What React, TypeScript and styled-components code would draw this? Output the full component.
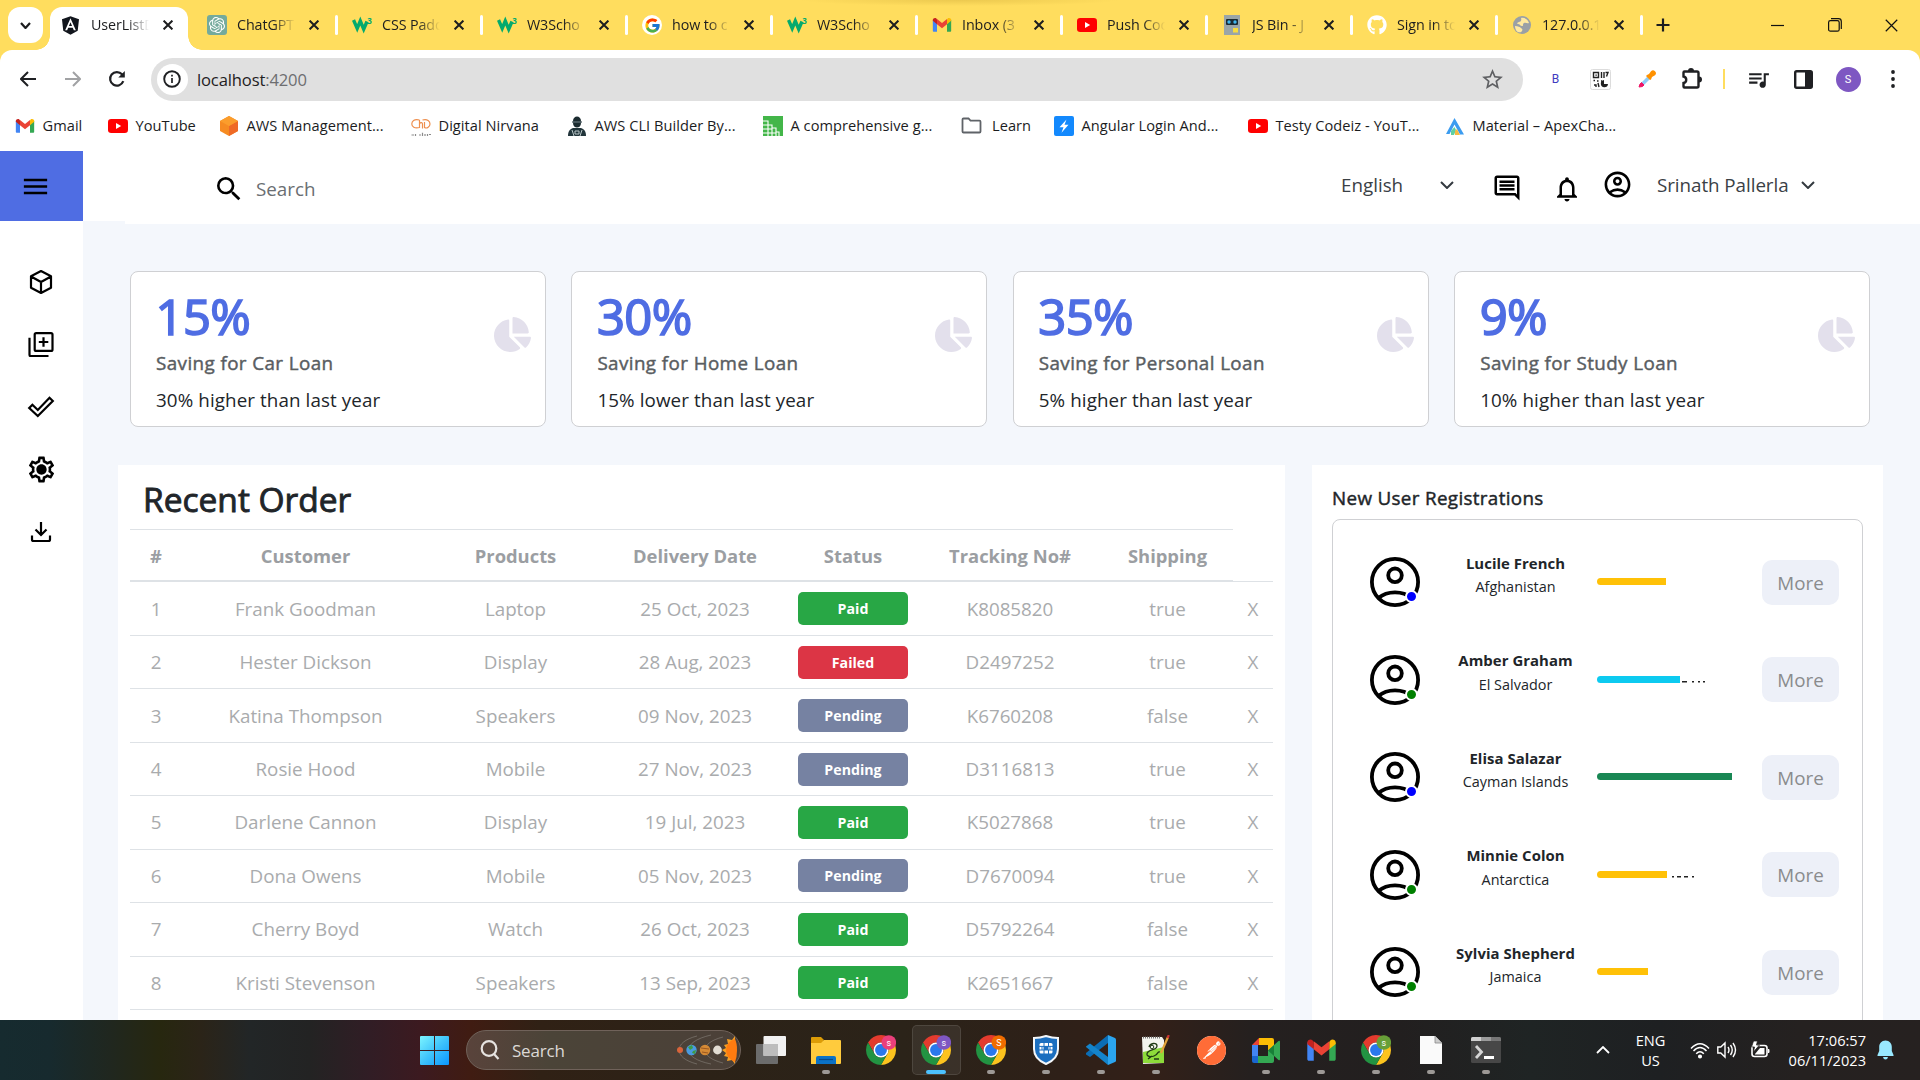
import React from "react";
import styled, { createGlobalStyle, css } from "styled-components";
import {
  MdMenu,
  MdSearch,
  MdOutlineComment,
  MdNotificationsNone,
  MdOutlineAccountCircle,
  MdQueueMusic,
  MdStarBorder,
  MdOutlineSettings,
} from "react-icons/md";
import { FaGithub, FaChartPie, FaAngular } from "react-icons/fa";
import { FcGoogle } from "react-icons/fc";
import { SiOpenai, SiPostman } from "react-icons/si";

const font = `"Open Sans", "Noto Sans", "Segoe UI", sans-serif`;

const GlobalStyle = createGlobalStyle`
  * { box-sizing: border-box; }
  body { margin: 0; background: #fff; }
  svg { display: block; flex: none; }
  h1, h2, h3, p { margin: 0; }
`;

const Screen = styled.div`
  width: 1920px;
  height: 1080px;
  overflow: hidden;
  display: flex;
  flex-direction: column;
  font-family: ${font};
  color: #212529;
  white-space: nowrap;
`;

/* ---------- Tab strip ---------- */

const TabStrip = styled.div`
  height: 50px;
  flex: none;
  display: flex;
  align-items: flex-start;
  background: radial-gradient(160px 6px at 960px 0, #ecc94f, #ffdd5e);
  padding-left: 8px;
`;

const TabMenu = styled.button`
  width: 35px;
  height: 36px;
  margin: 7px 7px 0 0;
  padding: 0;
  border: 0;
  border-radius: 12px;
  background: #fff;
  display: grid;
  place-items: center;
`;

const Tab = styled.div<{ $active?: boolean }>`
  position: relative;
  display: flex;
  align-items: center;
  height: 36px;
  width: 145px;
  margin-top: 7px;
  padding-left: 14px;
  ${(p) =>
    p.$active &&
    css`
      width: 138px;
      height: 43px;
      margin-right: 5px;
      padding: 0 0 7px 10px;
      background: #fff;
      border-radius: 12px 12px 0 0;
      &::before,
      &::after {
        content: "";
        position: absolute;
        bottom: 0;
        width: 14px;
        height: 14px;
      }
      &::before {
        left: -14px;
        background: radial-gradient(circle at 0 0, transparent 13.5px, #fff 14px);
      }
      &::after {
        right: -14px;
        background: radial-gradient(circle at 100% 0, transparent 13.5px, #fff 14px);
      }
    `}
`;

const TabTitle = styled.span`
  width: 58px;
  margin-left: 10px;
  overflow: hidden;
  font-size: 14.3px;
  line-height: 20px;
  letter-spacing: -0.1px;
  color: #1c1d1f;
  mask-image: linear-gradient(90deg, #000 62%, transparent 100%);
`;

const TabClose = styled.span`
  margin-left: 14px;
`;

const TabDivider = styled.span`
  margin-left: auto;
  width: 3px;
  height: 20px;
  border-radius: 2px;
  background: #fff;
`;

const NewTab = styled.span`
  margin: 18px 0 0 13px;
`;

const WindowControls = styled.div`
  display: flex;
  margin-left: auto;
  height: 50px;
  align-items: center;
  & > span {
    width: 57px;
    display: grid;
    place-items: center;
  }
`;

/* ---------- Toolbar ---------- */

const ToolbarBack = styled.div`
  flex: none;
  background: #ffdd5e;
`;

const Toolbar = styled.div`
  height: 51px;
  display: flex;
  align-items: center;
  background: #fff;
  border-radius: 12px 12px 0 0;
  padding: 7px 10px 0 17px;
`;

const NavButton = styled.span`
  width: 22px;
  margin-right: 22.5px;
  display: grid;
  place-items: center;
`;

const Omnibox = styled.div`
  width: 1372.500px;
  flex: none;
  height: 43px;
  border-radius: 22px;
  background: #e0e0e0;
  display: flex;
  align-items: center;
  padding: 0 18px 0 6px;
  margin-right: 25px;
  font-size: 16.6px;
  letter-spacing: -0.15px;
  color: #1f2023;
  & > svg:last-child {
    margin-left: auto;
  }
`;

const SiteInfo = styled.span`
  width: 31px;
  height: 31px;
  border-radius: 50%;
  background: #fff;
  display: grid;
  place-items: center;
  margin-right: 9.500px;
`;

const Port = styled.span`
  color: #6d6e70;
`;

const ToolSlot = styled.span<{ $w?: number }>`
  width: ${(p) => p.$w ?? 45}px;
  flex: none;
  display: grid;
  place-items: center;
`;

const ToolDivider = styled.i`
  width: 2px;
  height: 20px;
  margin-left: -5px;
  background: #ffdd5e;
`;

const ProfileBadge = styled.span`
  width: 25px;
  height: 25px;
  border-radius: 50%;
  background: #7e57c2;
  color: #fff;
  font: 11px/25px Roboto, sans-serif;
  text-align: center;
`;

const LetterIcon = styled.span`
  color: #3f3bc0;
  font: 12px Roboto, sans-serif;
`;

/* ---------- Bookmarks ---------- */

const BookmarkBar = styled.div`
  height: 50px;
  flex: none;
  display: flex;
  align-items: center;
  padding-left: 15px;
  background: #fff;
`;

const Bookmark = styled.div<{ $w: number; $gap?: number }>`
  width: ${(p) => p.$w}px;
  flex: none;
  display: flex;
  align-items: center;
  gap: ${(p) => p.$gap ?? 7.5}px;
  font-size: 14.6px;
  letter-spacing: 0.05px;
  color: #1b1c1e;
  & > span {
    margin-top: -2px;
  }
`;

/* ---------- Dashboard shell ---------- */

const Page = styled.div`
  height: 869px;
  flex: none;
  display: flex;
  overflow: hidden;
`;

const Sidebar = styled.aside`
  width: 83px;
  flex: none;
  background: #fff;
`;

const MenuToggle = styled.div`
  height: 70px;
  background: #4f6de3;
  padding: 19.500px 0 0 19.500px;
`;

const SideNav = styled.nav`
  display: flex;
  flex-direction: column;
  align-items: center;
  padding: 29.5px 1px 0 0;
`;

const SideItem = styled.span`
  height: 62.5px;
  display: grid;
  place-items: center;
`;

const Main = styled.main`
  flex: 1;
  background: #f4f7fc;
`;

const HeaderRow = styled.header`
  display: flex;
  align-items: flex-start;
`;

const HeaderGap = styled.div`
  width: 42px;
  height: 70px;
  background: #fff;
`;

const Header = styled.div`
  flex: 1;
  height: 73px;
  background: #fff;
  display: flex;
  align-items: flex-start;
  font-size: 18.8px;
  line-height: 28px;
`;

const SearchBox = styled.div`
  display: flex;
  align-items: center;
  width: 1216px;
  padding: 21.500px 0 0 87.500px;
  gap: 11.500px;
  color: #6a6e72;
`;

const LanguageSelect = styled.div`
  display: flex;
  align-items: center;
  justify-content: space-between;
  width: 113px;
  margin-top: 20px;
  color: #3a4045;
`;

const HeaderIcon = styled.span<{ $top: number; $left: number }>`
  margin: ${(p) => p.$top}px 0 0 ${(p) => p.$left}px;
`;

const UserMenu = styled.div`
  display: flex;
  align-items: center;
  width: 158px;
  justify-content: space-between;
  margin: 20px 0 0 24.500px;
  letter-spacing: -0.05px;
  color: #3a4045;
`;

/* ---------- Saving cards ---------- */

const CardGrid = styled.section`
  display: grid;
  grid-template-columns: repeat(4, 416px);
  column-gap: 25.4px;
  padding: 47px 0 0 47px;
`;

const Card = styled.article`
  height: 156px;
  background: #fff;
  border: 1px solid #cfd0d3;
  border-radius: 8px;
  display: flex;
  justify-content: space-between;
  padding: 20px 14px 0 25px;
`;

const Percent = styled.h2`
  font-size: 49px;
  font-weight: 400;
  line-height: 52px;
  margin: -2px 0 0 -0.500px;
  letter-spacing: -0.6px;
  -webkit-text-stroke: 1.7px #4f6de3;
  color: #4f6de3;
`;

const CardTitle = styled.h3`
  font-size: 18.8px;
  font-weight: 400;
  line-height: 24px;
  margin-top: 9px;
  letter-spacing: 0.42px;
  -webkit-text-stroke: 0.45px #595d61;
  color: #595d61;
`;

const CardNote = styled.p`
  font-size: 18.8px;
  line-height: 28px;
  margin-top: 11px;
  letter-spacing: 0.1px;
`;

const PieSlot = styled.span`
  margin-top: 24px;
  color: #e3e0ec;
`;

/* ---------- Orders ---------- */

const Panels = styled.section`
  display: flex;
  align-items: flex-start;
  gap: 27px;
  padding: 38px 0 0 35px;
`;

const OrdersPanel = styled.div`
  width: 1167px;
  height: 640px;
  background: #fff;
  padding: 12px 12px 0;
`;

const OrdersTitle = styled.h2`
  font-size: 33.5px;
  font-weight: 400;
  line-height: 44px;
  height: 52px;
  padding-left: 13px;
  letter-spacing: 0;
  -webkit-text-stroke: 0.9px #212529;
`;

const columns = "52px 247px 173px 186px 130px 184px 131px";

const OrderHead = styled.div`
  width: 1103px;
  height: 53px;
  border-top: 1px solid #dee2e6;
  border-bottom: 2px solid #dee2e6;
  display: grid;
  grid-template-columns: ${columns};
  align-items: center;
  justify-items: center;
  font-size: 18.4px;
  font-weight: 700;
  letter-spacing: -0.02px;
  color: #9b9ea2;
`;

const OrderRow = styled.div`
  width: 1143px;
  height: 53.43px;
  border-bottom: 1px solid #dee2e6;
  display: grid;
  grid-template-columns: ${columns} 40px;
  align-items: center;
  justify-items: center;
  font-size: 18.8px;
  color: #a9abad;
  &:nth-child(3) {
    height: 54px;
  }
`;

const HeadWrap = styled.div`
  display: flex;
  align-items: flex-end;
`;

const HeadTail = styled.i`
  width: 40px;
  height: 1px;
  background: #dee2e6;
`;

const statusColor: Record<string, string> = {
  Paid: "#28a745",
  Failed: "#dc3545",
  Pending: "#7682a2",
};

const StatusBadge = styled.span<{ $status: string }>`
  width: 110px;
  height: 33px;
  border-radius: 5px;
  background: ${(p) => statusColor[p.$status]};
  color: #fff;
  font-size: 14.2px;
  font-weight: 700;
  line-height: 33px;
  text-align: center;
  letter-spacing: 0;
`;

/* ---------- Registrations ---------- */

const UsersPanel = styled.div`
  width: 571px;
  height: 640px;
  background: #fff;
  padding: 19px 20px 0;
`;

const UsersTitle = styled.h3`
  font-size: 18.8px;
  font-weight: 400;
  line-height: 29px;
  height: 35px;
  letter-spacing: 0.35px;
  -webkit-text-stroke: 0.45px #212529;
`;

const UsersCard = styled.div`
  height: 700px;
  border: 1px solid #cfd0d3;
  border-radius: 8px;
  padding: 13.5px 23px 0 37px;
`;

const UserRow = styled.div`
  height: 97.5px;
  display: flex;
  align-items: center;
`;

const AvatarWrap = styled.span`
  position: relative;
  width: 50px;
  height: 50px;
`;

const PresenceDot = styled.i<{ $color: string }>`
  position: absolute;
  left: 35px;
  top: 33px;
  width: 13px;
  height: 13px;
  border: 2px solid #fff;
  border-radius: 50%;
  background: ${(p) => p.$color};
`;

const UserName = styled.div`
  width: 150px;
  margin: -14px 6.5px 0 20.5px;
  text-align: center;
  font-size: 14.4px;
  line-height: 24.5px;
  letter-spacing: 0.03px;
`;

const Strong = styled.div`
  font-weight: 700;
  font-size: 14.9px;
  letter-spacing: 0.05px;
`;

const Progress = styled.div`
  width: 135px;
  height: 7px;
  margin-top: -1px;
  display: flex;
  align-items: flex-end;
  border-radius: 4px 0 0 4px;
  overflow: hidden;
`;

const ProgressFill = styled.span<{ $pct: number; $color: string }>`
  width: ${(p) => p.$pct}%;
  height: 7px;
  background: ${(p) => p.$color};
`;

const MoreButton = styled.button`
  margin-left: auto;
  width: 77px;
  height: 45px;
  padding: 1px 0 0;
  border: 0;
  border-radius: 10px;
  background: #edf0f8;
  color: #8a8b8d;
  font-family: ${font};
  font-size: 18.8px;
`;

/* ---------- Taskbar ---------- */

const Taskbar = styled.footer`
  height: 60px;
  flex: none;
  display: flex;
  align-items: center;
  padding-left: 407px;
  color: #fff;
  background: linear-gradient(
    90deg,
    #162b2f 0,
    #172a2e 50px,
    #20271f 110px,
    #27270f 160px,
    #2b2418 200px,
    #222627 250px,
    #232323 310px,
    #311d25 370px,
    #3c1a20 420px,
    #401c12 470px,
    #302115 540px,
    #2c2217 700px,
    #2b2319 900px,
    #2e2018 1060px,
    #332018 1150px,
    #25201f 1250px,
    #221f1f 1400px,
    #1f2424 1530px,
    #1e2022 1660px,
    #252120 1800px,
    #262120 1920px
  );
`;

const TaskSlot = styled.span<{ $active?: boolean }>`
  position: relative;
  width: 49px;
  height: 50px;
  margin: 0 3px;
  border-radius: 5px;
  display: grid;
  place-items: center;
  border: 1px solid ${(p) => (p.$active ? "#ffffff1a" : "transparent")};
  background: ${(p) => (p.$active ? "#ffffff12" : "transparent")};
`;

const Indicator = styled.i<{ $active?: boolean }>`
  position: absolute;
  bottom: 0;
  width: ${(p) => (p.$active ? 20 : 8)}px;
  height: 4px;
  border-radius: 2px;
  background: ${(p) => (p.$active ? "#4cc2ff" : "#9d9996")};
`;

const TaskSearch = styled.div`
  width: 275px;
  height: 40px;
  margin: 0 2.5px 0 4px;
  border-radius: 20px;
  border: 1px solid #70625a;
  background: linear-gradient(90deg, #59433b, #4b4438 30%, #4b4038);
  display: flex;
  align-items: center;
  padding: 0 1px 0 13px;
  gap: 12px;
  font-size: 17px;
  letter-spacing: -0.2px;
  color: #dcd9d6;
  & > svg:last-child {
    margin-left: auto;
  }
`;

const Tray = styled.div`
  margin-left: auto;
  display: flex;
  align-items: center;
  padding-right: 16px;
`;

const TrayText = styled.div<{ $w: number; $right?: boolean }>`
  width: ${(p) => p.$w}px;
  text-align: ${(p) => (p.$right ? "right" : "center")};
  font-size: 14.6px;
  line-height: 20.5px;
  letter-spacing: 0;
`;

const TrayIcon = styled.span<{ $w: number }>`
  width: ${(p) => p.$w}px;
  display: grid;
  place-items: center;
`;

/* ---------- Drawings ---------- */

const CloseIcon = ({ size = 10, w = 2, color = "#1c1d1f" }) => (
  <svg width={size} height={size} viewBox="0 0 10 10">
    <path d="M.6.6l8.8 8.8M9.4.6L.6 9.4" stroke={color} strokeWidth={(w * 10) / size} />
  </svg>
);

const Chevron = ({ w = 14, h = 8, stroke = 2, color = "#343a40", up = false }) => (
  <svg width={w + 2} height={h + 2} viewBox={`-1 -1 ${w + 2} ${h + 2}`}>
    <path
      d={up ? `M0 ${h}L${w / 2} 0L${w} ${h}` : `M0 0L${w / 2} ${h}L${w} 0`}
      fill="none"
      stroke={color}
      strokeWidth={stroke}
    />
  </svg>
);

const GmailIcon = ({ w = 20 }) => (
  <svg width={w} height={w} viewBox="0 0 24 24">
    <path d="M1 5.6v13.2c0 .7.6 1.2 1.2 1.2H6V10z" fill="#4285f4" />
    <path d="M23 5.6v13.2c0 .7-.6 1.2-1.2 1.2H18V10z" fill="#34a853" />
    <path d="M18 5.5V11l5-4V6c0-2.400-2.700-3-4-2z" fill="#fbbc04" />
    <path d="M6 5.500V11L1 7V6c0-2.400 2.700-3 4-2z" fill="#c5221f" />
    <path d="M6 11V4.800l6 4.700 6-4.700V11l-6 4.800z" fill="#ea4335" />
  </svg>
);

const YouTubeIcon = () => (
  <svg width="20" height="20" viewBox="0 0 20 20">
    <rect y="3" width="20" height="14" rx="3.200" fill="#f00" />
    <path d="M8 7l5.200 3L8 13z" fill="#fff" />
  </svg>
);

const W3Icon = () => (
  <svg width="20" height="20" viewBox="0 0 20 20">
    <path d="M1.500 5l3.700 8.500L8.300 6l3.400 8.200L15 6.500" fill="none" stroke="#04aa6d" strokeWidth="3.400" />
    <text x="15.300" y="8.500" fontSize="8" fontWeight="700" fontFamily="Open Sans" fill="#04aa6d">3</text>
  </svg>
);

const ChatGptTile = styled.span`
  width: 20px;
  height: 20px;
  flex: none;
  border-radius: 3px;
  background: #74aa9c;
  color: #fff;
  display: grid;
  place-items: center;
`;

const GoogleTile = styled(ChatGptTile)`
  border-radius: 50%;
  background: #fff;
`;

const PostmanTile = styled.span`
  width: 29px;
  height: 29px;
  border-radius: 50%;
  background: #fff;
`;

const JsBinIcon = () => (
  <svg width="20" height="20" viewBox="0 0 20 20">
    <rect x="2" width="16" height="20" fill="#9aa5a8" />
    <rect x="4" y="4" width="12" height="6" rx="1" fill="#1b2a33" />
    <circle cx="7" cy="7" r="1.700" fill="#3fb6f0" />
    <circle cx="13" cy="7" r="1.700" fill="#3fb6f0" />
    <rect x="11" y="13" width="5" height="4.500" fill="#f8dc3d" />
  </svg>
);

const GlobeIcon = () => (
  <svg width="20" height="20" viewBox="0 0 20 20">
    <circle cx="10" cy="10" r="9" fill="#9aa0a6" />
    <path d="M9 3c3-1 7 1 8 5-2 1-3-1-5 0s0 3-2 3-2-2-4-2 0-2 1-2 3-1 2-4zM3 11c3 0 5 1 6 2s2 1 1 3-3 1-4 1-3-3-3-6z" fill="#ffe9a0" />
  </svg>
);

const AwsBoxIcon = () => (
  <svg width="20" height="20" viewBox="0 0 20 20">
    <path d="M10 0l9 5v10l-9 5-9-5V5z" fill="#f68b22" />
    <path d="M10 10l9-5v10l-9 5z" fill="#ef6a26" />
    <path d="M10 0l9 5-9 5-9-5z" fill="#fb9d2c" />
  </svg>
);

const NirvanaIcon = () => (
  <svg width="20" height="20" viewBox="0 0 20 20" fill="none" stroke="#ee8f4e" strokeWidth="1.200">
    <path d="M8.500 4C3 2.500.8 5.500.8 8S3.500 13 8.500 11.500V4M8.500 7.500c1.500-1.500 3-1 3 .5v4.500M11.500 4c5-1.500 7.500 1.500 7.500 4s-3 5-5.500 3.500V6" />
    <path d="M.5 19h2.500M4.500 18v2M8 19h2M11.500 16.800v3.200M14 18v2M16.500 18v2M18 18.500h2" stroke="#8b8b8b" />
  </svg>
);

const BuilderIcon = () => (
  <svg width="20" height="20" viewBox="0 0 20 20">
    <path d="M6 5c0-6 8-6 8 0l1 1-1 1c0 6-8 6-8 0L5 6z" fill="#1b2b30" />
    <path d="M1 20c0-5 2-7 5-8h8c3 1 5 3 5 8z" fill="#22353b" />
    <path d="M5.500 6h9" stroke="#8fa0a4" strokeWidth=".8" />
    <path d="M5 14l2 6M15 14l-2 6M8 15h4v3H8z" stroke="#b9c6c8" strokeWidth="1" fill="none" />
  </svg>
);

const GuideIcon = () => (
  <svg width="20" height="20" viewBox="0 0 20 20">
    <rect width="20" height="20" fill="#43b649" />
    <path d="M0 5h5v4h4v3h4v4h3v4M0 9h5v11M0 13h9v7M0 17h13v3" fill="none" stroke="#fff" strokeWidth="1.100" />
  </svg>
);

const FolderOutline = () => (
  <svg width="21" height="20" viewBox="0 0 21 20">
    <path d="M1.500 15.500v-12q0-1 1-1h5l2 2.200h9q1 0 1 1v9.800q0 1-1 1h-16q-1 0-1-1z" fill="none" stroke="#5f6368" strokeWidth="1.800" />
  </svg>
);

const BoltIcon = () => (
  <svg width="20" height="20" viewBox="0 0 20 20">
    <rect width="20" height="20" rx="2" fill="#1389fd" />
    <path d="M12.500 3.500L5.500 11.300h4l-2 5.400 7-7.900h-4z" fill="#fff" />
  </svg>
);

const ApexIcon = () => (
  <svg width="20" height="20" viewBox="0 0 20 20">
    <path d="M9.500 2L1 18h3.500l5-9.500 5.500 10h4z" fill="#3c9cf0" />
    <path d="M6 19v-4l3.500-4 1.500 3-2 5z" fill="#5fd0a0" />
    <path d="M10 19v-4l2-2 3 6z" fill="#f5b942" />
  </svg>
);

const QrIcon = () => (
  <svg width="21" height="21" viewBox="0 0 21 21">
    <rect x=".5" y=".5" width="20" height="20" rx="2" fill="#fff" stroke="#dcdcdc" />
    <path d="M3.500 3.500h5v5h-5zM11.500 3v6M14 3v6M15.500 3.500h2.500l-1.500 4M3.500 11.500h1.500M7 12h1.500M4 16h2v2M8 14l1 4M11 12h1" fill="none" stroke="#222" strokeWidth="1.400" />
    <path d="M14 11a3.600 3.600 0 1 0 4 4h-4z" fill="#222" />
    <path d="M5.500 5.500h1.200v1.200H5.500z" />
  </svg>
);

const PickerIcon = () => (
  <svg width="18" height="18" viewBox="0 0 18 18">
    <path d="M3 13l7-7 2.500 2.500-7 7z" fill="#8fcdf8" />
    <path d="M1 17l1-3 1.500-1.500 2.500 2.500L4.500 16.500z" fill="#ee1667" stroke="#ee1667" />
    <path d="M9 5l2-1 2-2.800q2-2 4 0t0 4L14 7l-1 2.500-1 .5-4-4z" fill="#ff9100" />
  </svg>
);

const PuzzleIcon = () => (
  <svg width="24" height="24" viewBox="0 0 24 24">
    <path d="M3.500 7V5.500q0-1 1-1H17q1.500 0 1.500 1.500v13q0 1.500-1.500 1.500H4.500q-1 0-1-1V16a3.300 3.300 0 0 0 0-6.500z" fill="none" stroke="#1f2023" strokeWidth="2.400" />
    <path d="M8 4a3 3 0 0 1 6 0zM19 9.500a3 3 0 0 1 0 6z" fill="#1f2023" />
  </svg>
);

const SidePanelIcon = () => (
  <svg width="19" height="19" viewBox="0 0 19 19">
    <rect x="1.200" y="1.200" width="16.600" height="16.600" rx="1.500" fill="none" stroke="#1f2023" strokeWidth="2.400" />
    <path d="M11 1h7v17h-7z" fill="#1f2023" />
  </svg>
);

const DotsIcon = () => (
  <svg width="6" height="18" viewBox="0 0 6 18" fill="#1f2023">
    <circle cx="3" cy="2" r="1.900" />
    <circle cx="3" cy="9" r="1.900" />
    <circle cx="3" cy="16" r="1.900" />
  </svg>
);

const ArrowIcon = ({ flip = false, color = "#1f2023" }) => (
  <svg width="16" height="16" viewBox="0 0 16 16" fill="none" stroke={color} strokeWidth="2">
    <path d={flip ? "M0 8h14.500M8 1l7 7-7 7" : "M16 8H1.500M8 1L1 8l7 7"} />
  </svg>
);

const ReloadIcon = () => (
  <svg width="18" height="18" viewBox="0 0 18 18">
    <path d="M15.300 11.200A6.800 6.800 0 1 1 14 4.300l1 1" fill="none" stroke="#1f2023" strokeWidth="2.200" />
    <path d="M16.800 1v6.500h-6.500z" fill="#1f2023" />
  </svg>
);

const InfoIcon = () => (
  <svg width="18" height="18" viewBox="0 0 18 18">
    <circle cx="9" cy="9" r="7.800" fill="none" stroke="#1f2023" strokeWidth="1.900" />
    <path d="M9 8v5M9 4.800v1.800" stroke="#1f2023" strokeWidth="1.700" />
  </svg>
);

const sideStroke = { fill: "none", stroke: "#000", strokeWidth: 2.2, strokeLinejoin: "round" as const };

const CubeIcon = () => (
  <svg width="26" height="26" viewBox="0 0 26 26" {...sideStroke}>
    <path d="M13 2l10 5.300v11.400L13 24 3 18.700V7.300zM3 7.500l10 5.500 10-5.500M13 13v11" />
  </svg>
);

const LibraryAddIcon = () => (
  <svg width="26" height="26" viewBox="0 -.7 26 26" {...sideStroke}>
    <rect x="6.700" y="1.400" width="17.800" height="17.800" rx="1.500" />
    <path d="M1.500 6v17q0 1.500 1.500 1.500h17.500M15.500 5.500v9.500M10.800 10.300h9.500" />
  </svg>
);

const DoubleCheckIcon = () => (
  <svg width="28" height="22" viewBox="0 0 28 22" {...sideStroke} strokeLinejoin="miter">
    <path d="M2.200 12l3.200-3.200 5.400 5.200L22.500 1.800l3.300 3.200-15 15z" />
  </svg>
);

const DownloadIcon = () => (
  <svg width="22" height="22" viewBox="0 0 22 22" {...sideStroke}>
    <path d="M11 1v12.500M5.500 8.500l5.500 5.500 5.500-5.500M2 14.500v4q0 1.500 1.500 1.500h15q1.500 0 1.500-1.500v-4" strokeLinejoin="miter" />
  </svg>
);

const SettingsIcon = () => (
  <svg width="31" height="31" viewBox="0 0 31 31">
    <MdOutlineSettings size={31} color="#000" />
    <circle cx="15.500" cy="15.500" r="4" />
  </svg>
);

const AvatarIcon = () => (
  <svg width="50" height="50" viewBox="0 0 50 50" fill="none" stroke="#000" strokeWidth="3.800">
    <circle cx="25" cy="25" r="23.100" />
    <circle cx="25" cy="18.300" r="6.800" />
    <path d="M8.500 41Q15 35.300 25 35.300T41.500 41" />
  </svg>
);

const ClippedLabel = ({ pattern, left }: { pattern: string; left: number }) => (
  <svg width={26 + left} height="1.500" viewBox={`${-left} 0 ${26 + left} 1.500`}>
    <path d="M0 .8H25" stroke="#222" strokeWidth="1.400" strokeDasharray={pattern} />
  </svg>
);

const ChromeIcon = ({ badge, letter = "s" }: { badge: string; letter?: string }) => (
  <svg width="30" height="30" viewBox="2 2 44 44">
    <path d="M4.950 13A22 22 0 0 1 43.050 13L24 13A11 11 0 0 0 14.470 29.500Z" fill="#e33b2e" />
    <path d="M43.050 13A22 22 0 0 1 24 46L33.530 29.500A11 11 0 0 0 24 13Z" fill="#fcc31e" />
    <path d="M24 46A22 22 0 0 1 4.950 13L14.470 29.500A11 11 0 0 0 33.530 29.500Z" fill="#229342" />
    <circle cx="24" cy="24" r="11" fill="#fff" />
    <circle cx="24" cy="24" r="8.700" fill="#2a78ec" />
    <circle cx="35.500" cy="13" r="10.700" fill={badge} />
    <text x="35.500" y="17.500" fontSize="13" textAnchor="middle" fontFamily="Roboto" fill="#fff">{letter}</text>
  </svg>
);

const WindowsIcon = () => (
  <svg width="29" height="29" viewBox="0 0 29 29">
    <defs>
      <linearGradient id="win" gradientUnits="userSpaceOnUse" x1="0" y1="0" x2="29" y2="29">
        <stop offset="0" stopColor="#7cf5ff" />
        <stop offset=".5" stopColor="#3fc3fb" />
        <stop offset="1" stopColor="#0a96ff" />
      </linearGradient>
    </defs>
    <path d="M0 1q0-1 1-1h13v14H0zM15 0h13q1 0 1 1v13H15zM0 15h14v14H1q-1 0-1-1zM15 15h14v13q0 1-1 1H15z" fill="url(#win)" />
  </svg>
);

const SolarIcon = () => (
  <svg width="64" height="32" viewBox="0 0 64 32">
    <g fill="none" stroke="#8c8680" strokeWidth=".8" opacity=".7">
      <path d="M22 2C-2 8-2 24 22 30M36 1C6 8 6 24 36 30M48 3C24 9 24 23 48 29" />
    </g>
    <circle cx="5" cy="16" r="3" fill="#d9643a" />
    <circle cx="16.500" cy="16" r="5.200" fill="#4a9be0" />
    <path d="M13 13l4-2 1 3-3 2zM18 17l3-1-1 4-3-1z" fill="#3e9b45" />
    <circle cx="30" cy="16" r="5.200" fill="#d58a35" />
    <path d="M26 14l8 1M27 18l6 1" stroke="#9c5820" />
    <circle cx="42.500" cy="16" r="4.400" fill="#e2ddd4" />
    <path d="M60 2l-3 4-5-1 1 5-4 1 2 3-4 2 4 3-2 3 4 1-1 4 5-1 3 4z" fill="#f7a022" />
    <path d="M60 5q-9 3-9 11t9 12q2-5 2-12t-2-11z" fill="#ff7b10" />
  </svg>
);

const TaskViewIcon = () => (
  <svg width="30" height="28" viewBox="0 0 30 28">
    <rect y="8" width="22" height="20" rx="1" fill="#6c6c6c" />
    <rect x="7.500" width="22.500" height="20" rx="1" fill="#f1f1f1" />
    <rect x="7.500" y="8" width="14.500" height="12" fill="#bdbdbd" />
  </svg>
);

const ExplorerIcon = () => (
  <svg width="30" height="27" viewBox="0 0 30 27">
    <path d="M0 1q0-1 1-1h9l3 3-3 5H0z" fill="#dc9c07" />
    <path d="M0 6h10l3-3h16q1 0 1 1v22q0 1-1 1H0z" fill="#ffcb3d" />
    <path d="M5 27v-6q0-2 2-2h16q2 0 2 2v6z" fill="#0b72c6" />
    <path d="M8 22.500h14" stroke="#06498a" strokeWidth="1.200" />
  </svg>
);

const ShieldIcon = () => (
  <svg width="26" height="30" viewBox="0 0 26 30">
    <path d="M1 3q6 0 12-2 6 2 12 2v11q0 10-12 15Q1 24 1 14z" fill="#1b6fc0" stroke="#f4f7fa" strokeWidth="2" />
    <rect x="6.500" y="8" width="13" height="10.500" rx="1.500" fill="#fff" />
    <path d="M6 11.400h14M6 15h14M11 7.500v4M15.500 7.500v4M9 11.400V15M17 11.400V15M11 15v4M15.500 15v4" stroke="#1b6fc0" strokeWidth="1" />
    <path d="M10.500 11h5v4h-5z" fill="#1b6fc0" />
  </svg>
);

const VsCodeIcon = () => (
  <svg width="30" height="30" viewBox="0 0 30 30">
    <path d="M22 0v8L4 22 0 19.500V18z" fill="#0b6db5" />
    <path d="M0 11.500L4 8.500 22 22v8L0 12z" fill="#1484cb" />
    <path d="M22 0l7 3q1 .5 1 1.500v21q0 1-1 1.500l-7 3z" fill="#2ba5ef" />
  </svg>
);

const NotepadIcon = () => (
  <svg width="28" height="30" viewBox="0 0 28 30">
    <path d="M0 2h20l2 3v23L1 29z" fill="#f3f4ee" />
    <path d="M1 17l21-5v16L1 28z" fill="#8ddb3a" />
    <path d="M1 2.500h18" stroke="#777" strokeWidth="2" strokeDasharray="1 1" />
    <path d="M7 12c1-4 8-5 8-1s-6 3-9 6 1 6 6 4 3-5 6-4M6 24l4-3M12 24h5" fill="none" stroke="#1f3a14" strokeWidth="1.300" />
    <circle cx="10" cy="12" r="1.800" fill="none" stroke="#1f3a14" />
    <path d="M26 2L19 18" stroke="#e2a33b" strokeWidth="2.200" />
    <path d="M26.800 0l-1.200 3" stroke="#c33" strokeWidth="2.200" />
  </svg>
);

const MeetIcon = () => (
  <svg width="28" height="25" viewBox="0 0 28 25">
    <path d="M7 0v7H0z" fill="#ea4335" />
    <path d="M0 7h6v11H0z" fill="#4285f4" />
    <path d="M0 18h6v7H2q-2 0-2-2z" fill="#1967d2" />
    <path d="M7 0h13q2 0 2 2v9l-6 2V7H7z" fill="#fbbc04" />
    <path d="M6 18h10v-5h6v10q0 2-2 2H6z" fill="#34a853" />
    <path d="M16 12.500L26.500 3Q28 2 28 4v17q0 2-1.500 1z" fill="#34a853" />
    <path d="M16 12.500l6-5.500v11z" fill="#188038" />
  </svg>
);

const PageIcon = () => (
  <svg width="22" height="28" viewBox="0 0 22 28">
    <path d="M0 0h15l7 7v21H0z" fill="#fafafa" />
    <path d="M15 0v7h7" fill="#ccc" stroke="#888" strokeWidth=".8" />
  </svg>
);

const TerminalIcon = () => (
  <svg width="30" height="26" viewBox="0 0 30 26">
    <rect width="30" height="26" rx="1.500" fill="#474747" />
    <path d="M0 4V1.500Q0 0 1.500 0H10v4z" fill="#d0d0d0" />
    <path d="M10 0h10v4H10z" fill="#9b9b9b" />
    <path d="M20 0h8.500Q30 0 30 1.500V4H20z" fill="#767676" />
    <path d="M5 9l5.500 6L5 21" fill="none" stroke="#d5d5d5" strokeWidth="2.800" />
    <path d="M13 20.500h10" stroke="#fff" strokeWidth="3" />
  </svg>
);

const WifiIcon = () => (
  <svg width="20" height="17" viewBox="0 0 20 17" fill="none" stroke="#fff" strokeWidth="1.500">
    <path d="M1 6.500q9-9.500 18 0M3.500 9q6.500-7 13 0M6.200 11.700q3.800-4 7.600 0" />
    <circle cx="10" cy="14.500" r="1.300" fill="#fff" />
  </svg>
);

const VolumeIcon = () => (
  <svg width="20" height="18" viewBox="0 0 20 18" fill="none" stroke="#fff" strokeWidth="1.400">
    <path d="M.8 6h3L8 2v14l-4.200-4h-3zM11 6q2 3 0 6M13.500 4q3.500 5 0 10M16 2q5 7 0 14" />
  </svg>
);

const BatteryIcon = () => (
  <svg width="20" height="18" viewBox="0 0 20 18">
    <rect x="2" y="4.500" width="15" height="11" rx="2.500" fill="none" stroke="#fff" strokeWidth="1.600" />
    <path d="M5 13l5-6h4.500v6.500H5z" fill="#fff" />
    <path d="M18 8h1.200q.8 1.800 0 4H18z" fill="#fff" />
    <path d="M3.500 0h4l-1 4h3l-6 7 1-5h-3z" fill="#fff" stroke="#252120" strokeWidth=".8" />
  </svg>
);

const BellIcon = () => (
  <svg width="17" height="20" viewBox="0 0 17 20" fill="#99e9ff">
    <path d="M8.500.5c-4 0-6.300 3-6.300 6.500v4L.5 15v1h16v-1l-1.700-4V7c0-3.500-2.300-6.500-6.300-6.500zM6 17h5q-.5 2.500-2.500 2.500T6 17z" />
  </svg>
);

/* ---------- Data ---------- */

const w3 = <W3Icon />;
const tabs: [React.ReactNode, string][] = [
  [<ChatGptTile><SiOpenai size={16} /></ChatGptTile>, "ChatGPT"],
  [w3, "CSS Padd"],
  [w3, "W3Scho"],
  [<GoogleTile><FcGoogle size={17} /></GoogleTile>, "how to c"],
  [w3, "W3Scho"],
  [<GmailIcon />, "Inbox (3"],
  [<YouTubeIcon />, "Push Cod"],
  [<JsBinIcon />, "JS Bin - J"],
  [<FaGithub size={20} color="#fff" />, "Sign in to"],
  [<GlobeIcon />, "127.0.0.1"],
];

const bookmarks: [React.ReactNode, string, number, number?][] = [
  [<GmailIcon />, "Gmail", 93],
  [<YouTubeIcon />, "YouTube", 111],
  [<AwsBoxIcon />, "AWS Management...", 192],
  [<NirvanaIcon />, "Digital Nirvana", 156],
  [<BuilderIcon />, "AWS CLI Builder By...", 196],
  [<GuideIcon />, "A comprehensive g...", 198],
  [<FolderOutline />, "Learn", 93, 10],
  [<BoltIcon />, "Angular Login And...", 194],
  [<YouTubeIcon />, "Testy Codeiz - YouT...", 197],
  [<ApexIcon />, "Material – ApexCha...", 190],
];

const cards = [
  ["15%", "Saving for Car Loan", "30% higher than last year"],
  ["30%", "Saving for Home Loan", "15% lower than last year"],
  ["35%", "Saving for Personal Loan", "5% higher than last year"],
  ["9%", "Saving for Study Loan", "10% higher than last year"],
];

const orders = [
  ["1", "Frank Goodman", "Laptop", "25 Oct, 2023", "Paid", "K8085820", "true"],
  ["2", "Hester Dickson", "Display", "28 Aug, 2023", "Failed", "D2497252", "true"],
  ["3", "Katina Thompson", "Speakers", "09 Nov, 2023", "Pending", "K6760208", "false"],
  ["4", "Rosie Hood", "Mobile", "27 Nov, 2023", "Pending", "D3116813", "true"],
  ["5", "Darlene Cannon", "Display", "19 Jul, 2023", "Paid", "K5027868", "true"],
  ["6", "Dona Owens", "Mobile", "05 Nov, 2023", "Pending", "D7670094", "true"],
  ["7", "Cherry Boyd", "Watch", "26 Oct, 2023", "Paid", "D5792264", "false"],
  ["8", "Kristi Stevenson", "Speakers", "13 Sep, 2023", "Paid", "K2651667", "false"],
];

const users = [
  { name: "Lucile French", country: "Afghanistan", pct: 51, color: "#ffc107", dot: "blue" },
  { name: "Amber Graham", country: "El Salvador", pct: 61.5, color: "#0dcaf0", dot: "green", clip: "5 5 2 4 2 3 2 3", left: 2 },
  { name: "Elisa Salazar", country: "Cayman Islands", pct: 100, color: "#198754", dot: "blue" },
  { name: "Minnie Colon", country: "Antarctica", pct: 52, color: "#ffc107", dot: "green", clip: "2 3 4 3 4 4 2 9", left: 5 },
  { name: "Sylvia Shepherd", country: "Jamaica", pct: 38, color: "#ffc107", dot: "green" },
];

const tasks: { icon: React.ReactNode; open?: boolean; active?: boolean }[] = [
  { icon: <TaskViewIcon /> },
  { icon: <ExplorerIcon />, open: true },
  { icon: <ChromeIcon badge="#ea3f7b" /> },
  { icon: <ChromeIcon badge="#7e57c2" />, open: true, active: true },
  { icon: <ChromeIcon badge="#ef6c00" letter="S" />, open: true },
  { icon: <ShieldIcon />, open: true },
  { icon: <VsCodeIcon />, open: true },
  { icon: <NotepadIcon />, open: true },
  { icon: <PostmanTile><SiPostman size={29} color="#ff6c37" /></PostmanTile> },
  { icon: <MeetIcon />, open: true },
  { icon: <GmailIcon w={31} />, open: true },
  { icon: <ChromeIcon badge="#689f38" />, open: true },
  { icon: <PageIcon />, open: true },
  { icon: <TerminalIcon />, open: true },
];

/* ---------- Views ---------- */

function Browser() {
  return (
    <>
      <TabStrip>
        <TabMenu><Chevron w={9} h={5} color="#1c1d1f" stroke={2.2} /></TabMenu>
        <Tab $active>
          <FaAngular size={21} color="#12161d" />
          <TabTitle>UserListD</TabTitle>
          <TabClose><CloseIcon /></TabClose>
        </Tab>
        {tabs.map(([icon, title], i) => (
          <Tab key={i}>
            {icon}
            <TabTitle>{title}</TabTitle>
            <TabClose><CloseIcon /></TabClose>
            <TabDivider />
          </Tab>
        ))}
        <NewTab>
          <svg width="14" height="14" viewBox="0 0 14 14"><path d="M7 .5v13M.5 7h13" stroke="#1c1d1f" strokeWidth="2.200" /></svg>
        </NewTab>
        <WindowControls>
          <span><svg width="13" height="13"><path d="M0 6.500h13" stroke="#111" strokeWidth="1.200" /></svg></span>
          <span>
            <svg width="14" height="14" fill="none" stroke="#111" strokeWidth="1.200">
              <rect x=".6" y="2.600" width="10.600" height="10.600" rx="1.800" />
              <path d="M3 .6h7.500q2.800 0 2.800 2.800V11" />
            </svg>
          </span>
          <span><CloseIcon size={13} w={1.2} color="#111" /></span>
        </WindowControls>
      </TabStrip>
      <ToolbarBack>
        <Toolbar>
          <NavButton><ArrowIcon /></NavButton>
          <NavButton><ArrowIcon flip color="#a1a2a4" /></NavButton>
          <NavButton><ReloadIcon /></NavButton>
          <Omnibox>
            <SiteInfo><InfoIcon /></SiteInfo>
            <span>localhost</span><Port>:4200</Port>
            <MdStarBorder size={25} color="#5f6063" />
          </Omnibox>
          <ToolSlot $w={15}><LetterIcon>B</LetterIcon></ToolSlot>
          <ToolSlot $w={75}><QrIcon /></ToolSlot>
          <ToolSlot $w={17}><PickerIcon /></ToolSlot>
          <ToolSlot $w={73}><PuzzleIcon /></ToolSlot>
          <ToolDivider />
          <ToolSlot $w={66}><MdQueueMusic size={25} color="#1f2023" /></ToolSlot>
          <ToolSlot $w={24}><SidePanelIcon /></ToolSlot>
          <ToolSlot $w={66}><ProfileBadge>S</ProfileBadge></ToolSlot>
          <ToolSlot $w={24}><DotsIcon /></ToolSlot>
        </Toolbar>
      </ToolbarBack>
      <BookmarkBar>
        {bookmarks.map(([icon, label, w, gap]) => (
          <Bookmark key={label} $w={w} $gap={gap}>{icon}<span>{label}</span></Bookmark>
        ))}
      </BookmarkBar>
    </>
  );
}

function Dashboard() {
  return (
    <Page>
      <Sidebar>
        <MenuToggle><MdMenu size={31} color="#000" /></MenuToggle>
        <SideNav>
          <SideItem><CubeIcon /></SideItem>
          <SideItem><LibraryAddIcon /></SideItem>
          <SideItem><DoubleCheckIcon /></SideItem>
          <SideItem><SettingsIcon /></SideItem>
          <SideItem><DownloadIcon /></SideItem>
        </SideNav>
      </Sidebar>
      <Main>
        <HeaderRow>
          <HeaderGap />
          <Header>
            <SearchBox><MdSearch size={32} color="#000" />Search</SearchBox>
            <LanguageSelect>English<Chevron w={12} h={6} /></LanguageSelect>
            <HeaderIcon $top={22} $left={38}><MdOutlineComment size={30} color="#000" /></HeaderIcon>
            <HeaderIcon $top={23} $left={30}><MdNotificationsNone size={30} color="#000" /></HeaderIcon>
            <HeaderIcon $top={17.5} $left={19.5}><MdOutlineAccountCircle size={31} color="#000" /></HeaderIcon>
            <UserMenu>Srinath Pallerla<Chevron w={12} h={6} /></UserMenu>
          </Header>
        </HeaderRow>
        <CardGrid>
          {cards.map(([pct, title, note]) => (
            <Card key={title}>
              <div>
                <Percent>{pct}</Percent>
                <CardTitle>{title}</CardTitle>
                <CardNote>{note}</CardNote>
              </div>
              <PieSlot><FaChartPie size={37} /></PieSlot>
            </Card>
          ))}
        </CardGrid>
        <Panels>
          <OrdersPanel>
            <OrdersTitle>Recent Order</OrdersTitle>
            <HeadWrap>
              <OrderHead>
                {["#", "Customer", "Products", "Delivery Date", "Status", "Tracking No#", "Shipping"].map((h) => (
                  <span key={h}>{h}</span>
                ))}
              </OrderHead>
              <HeadTail />
            </HeadWrap>
            {orders.map((o) => (
              <OrderRow key={o[0]}>
                {o.map((v, i) => (i === 4 ? <StatusBadge key={i} $status={v}>{v}</StatusBadge> : <span key={i}>{v}</span>))}
                <span>X</span>
              </OrderRow>
            ))}
          </OrdersPanel>
          <UsersPanel>
            <UsersTitle>New User Registrations</UsersTitle>
            <UsersCard>
              {users.map((u) => (
                <UserRow key={u.name}>
                  <AvatarWrap><AvatarIcon /><PresenceDot $color={u.dot} /></AvatarWrap>
                  <UserName><Strong>{u.name}</Strong>{u.country}</UserName>
                  <Progress>
                    <ProgressFill $pct={u.pct} $color={u.color} />
                    {u.clip && <ClippedLabel pattern={u.clip} left={u.left!} />}
                  </Progress>
                  <MoreButton>More</MoreButton>
                </UserRow>
              ))}
            </UsersCard>
          </UsersPanel>
        </Panels>
      </Main>
    </Page>
  );
}

function WindowsTaskbar() {
  return (
    <Taskbar>
      <TaskSlot><WindowsIcon /></TaskSlot>
      <TaskSearch>
        <svg width="20" height="20" viewBox="0 0 20 20" fill="none" stroke="#e6e3e0" strokeWidth="2.200">
          <circle cx="9" cy="8.500" r="7.300" /><path d="M14 14l4.500 5" />
        </svg>
        Search
        <SolarIcon />
      </TaskSearch>
      {tasks.map((t, i) => (
        <TaskSlot key={i} $active={t.active}>
          {t.icon}
          {t.open && <Indicator $active={t.active} />}
        </TaskSlot>
      ))}
      <Tray>
        <TrayIcon $w={16}><Chevron up w={12} h={6} color="#fff" stroke={1.8} /></TrayIcon>
        <TrayText $w={79}>ENG<br />US</TrayText>
        <TrayIcon $w={14}><WifiIcon /></TrayIcon>
        <TrayIcon $w={46}><VolumeIcon /></TrayIcon>
        <TrayIcon $w={14}><BatteryIcon /></TrayIcon>
        <TrayText $w={102} $right>17:06:57<br />06/11/2023</TrayText>
        <TrayIcon $w={38}><BellIcon /></TrayIcon>
      </Tray>
    </Taskbar>
  );
}

export default function App() {
  return (
    <Screen>
      <GlobalStyle />
      <Browser />
      <Dashboard />
      <WindowsTaskbar />
    </Screen>
  );
}
